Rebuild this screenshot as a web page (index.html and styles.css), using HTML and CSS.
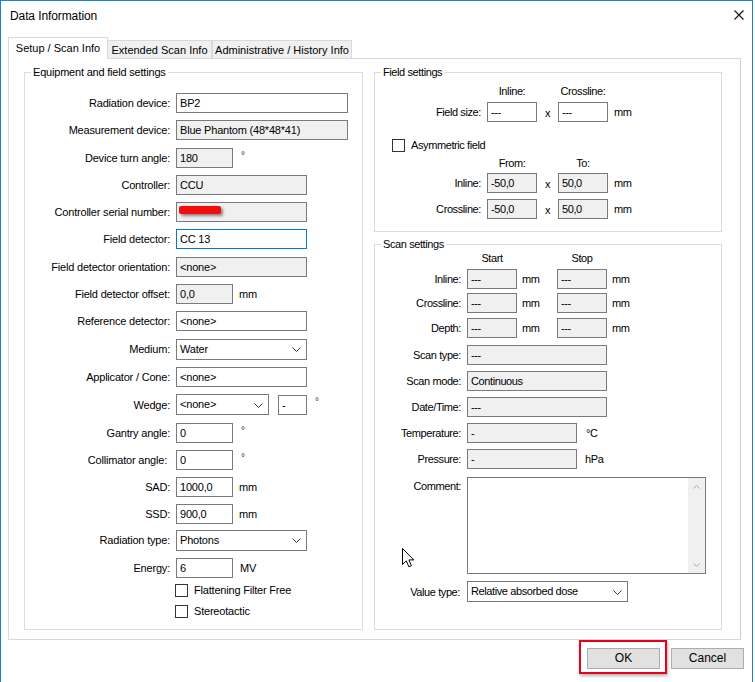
FILE: index.html
```html
<!DOCTYPE html>
<html lang="en">
<head>
<meta charset="utf-8">
<title>Data Information</title>
<link rel="stylesheet" href="styles.css">
</head>
<body>
<div class="window">
  <div class="titlebar">
    <span class="title">Data Information</span>
    <svg class="close" width="10" height="10" viewBox="0 0 10 10"><path d="M0.5 0.5 L9.5 9.5 M9.5 0.5 L0.5 9.5" stroke="#111" stroke-width="1.1" fill="none"/></svg>
  </div>

  <div class="tabs">
    <div class="tab active">Setup / Scan Info</div>
    <div class="tab t-ext">Extended Scan Info</div>
    <div class="tab t-adm">Administrative / History Info</div>
  </div>

  <div class="panel">
    <div class="group g-equip">
      <div class="group-title">Equipment and field settings</div>
      <div class="form">
        <div class="row"><span class="lbl">Radiation device:</span><span class="inp w-xl">BP2</span></div>
        <div class="row"><span class="lbl">Measurement device:</span><span class="inp ro w-xl">Blue Phantom (48*48*41)</span></div>
        <div class="row"><span class="lbl">Device turn angle:</span><span class="inp ro w-s">180</span><span class="deg">°</span></div>
        <div class="row"><span class="lbl">Controller:</span><span class="inp ro w-l">CCU</span></div>
        <div class="row"><span class="lbl">Controller serial number:</span><span class="inp ro w-l"><span class="redact"></span></span></div>
        <div class="row"><span class="lbl">Field detector:</span><span class="inp focus w-l">CC 13</span></div>
        <div class="row"><span class="lbl">Field detector orientation:</span><span class="inp ro w-l">&lt;none&gt;</span></div>
        <div class="row"><span class="lbl">Field detector offset:</span><span class="inp ro w-s">0,0</span><span class="unit">mm</span></div>
        <div class="row"><span class="lbl">Reference detector:</span><span class="inp w-l">&lt;none&gt;</span></div>
        <div class="row sel-row"><span class="lbl">Medium:</span><span class="sel w-l">Water<svg class="chev" width="9" height="5" viewBox="0 0 9 5"><path d="M0.5 0.5 L4.5 4.5 L8.5 0.5" stroke="#333" fill="none"/></svg></span></div>
        <div class="row"><span class="lbl">Applicator / Cone:</span><span class="inp w-l">&lt;none&gt;</span></div>
        <div class="row sel-row"><span class="lbl">Wedge:</span><span class="sel w-m">&lt;none&gt;<svg class="chev" width="9" height="5" viewBox="0 0 9 5"><path d="M0.5 0.5 L4.5 4.5 L8.5 0.5" stroke="#333" fill="none"/></svg></span><span class="inp w-xs gap9">-</span><span class="deg">°</span></div>
        <div class="row"><span class="lbl">Gantry angle:</span><span class="inp w-s">0</span><span class="deg">°</span></div>
        <div class="row"><span class="lbl lbl-coll">Collimator angle:</span><span class="inp w-s">0</span><span class="deg">°</span></div>
        <div class="row"><span class="lbl">SAD:</span><span class="inp w-s">1000,0</span><span class="unit">mm</span></div>
        <div class="row"><span class="lbl">SSD:</span><span class="inp w-s">900,0</span><span class="unit">mm</span></div>
        <div class="row sel-row rt"><span class="lbl">Radiation type:</span><span class="sel w-l">Photons<svg class="chev" width="9" height="5" viewBox="0 0 9 5"><path d="M0.5 0.5 L4.5 4.5 L8.5 0.5" stroke="#333" fill="none"/></svg></span></div>
        <div class="row"><span class="lbl">Energy:</span><span class="inp w-s">6</span><span class="unit u7">MV</span></div>
        <div class="chkrow c1"><span class="chk"></span><span>Flattening Filter Free</span></div>
        <div class="chkrow c2"><span class="chk"></span><span>Stereotactic</span></div>
      </div>
    </div>

    <div class="rightcol">
      <div class="group g-field">
        <div class="group-title">Field settings</div>
        <div class="fgrid hdr h1"><span></span><span class="ctr">Inline:</span><span></span><span class="ctr">Crossline:</span><span></span></div>
        <div class="fgrid frow r1"><span class="rl">Field size:</span><span class="inp">---</span><span class="ctr x">x</span><span class="inp">---</span><span class="unit">mm</span></div>
        <div class="chkrow asym"><span class="chk"></span><span>Asymmetric field</span></div>
        <div class="fgrid hdr h2"><span></span><span class="ctr">From:</span><span></span><span class="ctr">To:</span><span></span></div>
        <div class="fgrid frow r2"><span class="rl">Inline:</span><span class="inp ro">-50,0</span><span class="ctr x">x</span><span class="inp ro">50,0</span><span class="unit">mm</span></div>
        <div class="fgrid frow r3"><span class="rl">Crossline:</span><span class="inp ro">-50,0</span><span class="ctr x">x</span><span class="inp ro">50,0</span><span class="unit">mm</span></div>
      </div>

      <div class="group g-scan">
        <div class="group-title">Scan settings</div>
        <div class="sgrid hdr s-h"><span></span><span class="ctr">Start</span><span></span><span class="ctr">Stop</span><span></span></div>
        <div class="sgrid srow s1"><span class="rl">Inline:</span><span class="inp ro">---</span><span class="unit">mm</span><span class="inp ro">---</span><span class="unit">mm</span></div>
        <div class="sgrid srow s2"><span class="rl">Crossline:</span><span class="inp ro">---</span><span class="unit">mm</span><span class="inp ro">---</span><span class="unit">mm</span></div>
        <div class="sgrid srow s3"><span class="rl">Depth:</span><span class="inp ro">---</span><span class="unit">mm</span><span class="inp ro">---</span><span class="unit">mm</span></div>
        <div class="srow2 m7"><span class="rl2">Scan type:</span><span class="inp ro w-140">---</span></div>
        <div class="srow2 m6"><span class="rl2">Scan mode:</span><span class="inp ro w-140">Continuous</span></div>
        <div class="srow2 m6"><span class="rl2">Date/Time:</span><span class="inp ro w-140">---</span></div>
        <div class="srow2 m6"><span class="rl2">Temperature:</span><span class="inp ro w-110">-</span><span class="unit u9">°C</span></div>
        <div class="srow2 m6"><span class="rl2">Pressure:</span><span class="inp ro w-110">-</span><span class="unit u8">hPa</span></div>
        <div class="srow2 comment-row"><span class="rl2 top">Comment:</span>
          <div class="textarea">
            <div class="scrollbar">
              <span class="sb-btn"><svg width="7" height="4" viewBox="0 0 7 4"><path d="M0.5 3.5 L3.5 0.5 L6.5 3.5" stroke="#a6a6a6" fill="none"/></svg></span>
              <span class="sb-btn"><svg width="7" height="4" viewBox="0 0 7 4"><path d="M0.5 0.5 L3.5 3.5 L6.5 0.5" stroke="#a6a6a6" fill="none"/></svg></span>
            </div>
          </div>
        </div>
        <div class="srow2 vt"><span class="rl2 rl-vt">Value type:</span><span class="sel w-161">Relative absorbed dose<svg class="chev" width="9" height="5" viewBox="0 0 9 5"><path d="M0.5 0.5 L4.5 4.5 L8.5 0.5" stroke="#333" fill="none"/></svg></span></div>
      </div>
    </div>
  </div>

  <div class="buttons">
    <div class="highlight"><button class="btn">OK</button></div>
    <button class="btn cancel">Cancel</button>
  </div>

  <svg class="cursor" width="13" height="20" viewBox="0 0 13 20"><path d="M0.5 0.5 L0.5 16.5 L4.3 12.9 L6.9 18.8 L9.4 17.7 L6.9 11.9 L11.8 11.9 Z" fill="#fff" stroke="#000" stroke-width="1" stroke-linejoin="miter"/></svg>
</div>
</body>
</html>
```

FILE: styles.css
```css
* { box-sizing: border-box; }
html, body { margin: 0; padding: 0; background: #fff; }
body {
  font-family: "Liberation Sans", Arial, sans-serif;
  font-size: 11px;
  color: #000;
}

.window {
  position: relative;
  width: 753px;
  height: 682px;
  border: 1px solid #1883d7;
  border-bottom: none;
  background: #fff;
  overflow: hidden;
}

/* title bar */
.titlebar {
  display: flex;
  justify-content: space-between;
  align-items: flex-start;
  height: 36px;
}
.title {
  font-size: 12px;
  line-height: 15px;
  margin: 8px 0 0 9px;
  letter-spacing: -0.1px;
}
.close { margin: 9px 8px 0 0; }

/* tabs */
.tabs {
  position: relative;
  z-index: 1;
  display: flex;
  align-items: flex-end;
  height: 21px;
  margin-left: 7px;
}
.tab {
  height: 18px;
  line-height: 18px;
  border: 1px solid #d9d9d9;
  border-bottom: none;
  background: #f0f0f0;
  text-align: center;
  white-space: nowrap;
}
.tab.active {
  width: 100px;
  height: 22px;
  line-height: 21px;
  margin-bottom: -1px;
  background: #fff;
}
.t-ext { width: 104px; border-left: none; }
.t-adm { width: 140px; border-left: 1px solid #d9d9d9; }

/* panel */
.panel {
  margin-left: 7px;
  width: 733px;
  height: 582px;
  border: 1px solid #d9d9d9;
  border-right-color: #cfcfcf;
  padding: 13px 17px 9px 15px;
  display: flex;
  gap: 11px;
  letter-spacing: -0.2px;
}

.group {
  border: 1px solid #dcdcdc;
}
.group-title {
  display: table;
  margin: -7px 0 0 6px;
  padding: 0 2px;
  background: #fff;
  line-height: 13px;
  white-space: nowrap;
}

.g-equip { width: 339px; }
.rightcol {
  width: 348px;
  display: flex;
  flex-direction: column;
}
.g-field { height: 160px; letter-spacing: -0.4px; }
.g-scan { flex: 1; margin-top: 12px; letter-spacing: -0.4px; }

/* left form */
.form {
  display: flex;
  flex-direction: column;
  gap: 7.3px;
  padding-top: 14px;
}
.row {
  display: flex;
  align-items: center;
  height: 20px;
}
.sel-row { height: 21px; }
.row.rt { margin-top: -2px; }
.lbl {
  flex: none;
  width: 151px;
  padding-right: 6px;
  text-align: right;
  white-space: nowrap;
}
.lbl-coll { padding-right: 9px; }

.inp {
  display: block;
  flex: none;
  height: 20px;
  border: 1px solid #7a7a7a;
  background: #fff;
  padding: 0 3px;
  line-height: 18px;
  white-space: nowrap;
  overflow: hidden;
}
.inp.ro { background: #f0f0f0; }
.inp.focus { border-color: #0078d7; }

.sel {
  display: flex;
  align-items: center;
  justify-content: space-between;
  flex: none;
  height: 21px;
  border: 1px solid #7a7a7a;
  background: #fff;
  padding: 0 5px 0 3px;
  line-height: 19px;
  white-space: nowrap;
}
.chev { flex: none; margin-top: 1px; }

.w-xl { width: 172px; }
.w-l { width: 131px; }
.w-m { width: 93px; }
.w-s { width: 57px; }
.w-xs { width: 29px; }
.gap9 { margin-left: 9px; }
.w-140 { width: 140px; }
.w-110 { width: 110px; }
.w-161 { width: 161px; }

.unit { margin-left: 6px; white-space: nowrap; }
.u7 { margin-left: 7px; }
.u8 { margin-left: 8px; }
.u9 { margin-left: 9px; }
.deg {
  align-self: flex-start;
  margin: 1px 0 0 8px;
  line-height: 13px;
  font-size: 10px;
  color: #333;
}

.redact {
  display: inline-block;
  width: 42px;
  height: 8px;
  margin: 3px 0 0 -1px;
  vertical-align: top;
  background: #f20c0c;
  border-radius: 2px;
  box-shadow: 2px 2px 3px rgba(60, 40, 40, 0.55);
}

/* checkboxes */
.chkrow {
  display: flex;
  align-items: center;
  gap: 6px;
  height: 13px;
  line-height: 13px;
  white-space: nowrap;
}
.chk {
  flex: none;
  width: 13px;
  height: 13px;
  border: 1px solid #333;
  background: #fff;
}
.chkrow.c1 { margin: -1px 0 0 150px; }
.chkrow.c2 { margin-left: 150px; }
.chkrow.asym { margin: 17px 0 0 17px; }

/* field settings grid */
.fgrid {
  display: grid;
  grid-template-columns: 112px 50px 21px 50px auto;
  align-items: center;
}
.sgrid {
  display: grid;
  grid-template-columns: 92px 50px 40px 50px auto;
  align-items: center;
}
.hdr { line-height: 13px; height: 13px; }
.ctr { text-align: center; white-space: nowrap; }
.rl {
  text-align: right;
  padding-right: 6px;
  white-space: nowrap;
}
.frow, .srow { height: 20px; }
.frow .unit, .srow .unit { margin-left: 0; padding-left: 6px; }
.srow .unit { padding-left: 5px; }
.x { line-height: 13px; padding-top: 2px; }

.h1 { margin-top: 6px; }
.r1 { margin-top: 4px; }
.h2 { margin-top: 5px; }
.r2 { margin-top: 3px; }
.r3 { margin-top: 6px; }

/* scan settings */
.s-h { margin-top: 1px; }
.s1 { margin-top: 4px; }
.s2 { margin-top: 4px; }
.s3 { margin-top: 5px; }
.srow2 {
  display: flex;
  align-items: center;
  height: 20px;
}
.m7 { margin-top: 7px; }
.m6 { margin-top: 6px; }
.rl2 {
  flex: none;
  width: 92px;
  padding-right: 6px;
  text-align: right;
  white-space: nowrap;
}
.rl-vt { padding-right: 7px; }
.comment-row {
  height: 97px;
  align-items: flex-start;
  margin-top: 8px;
}
.rl2.top { padding-top: 3px; line-height: 13px; }
.textarea {
  width: 239px;
  height: 97px;
  border: 1px solid #7a7a7a;
  background: #fff;
  display: flex;
  justify-content: flex-end;
}
.scrollbar {
  width: 17px;
  background: #f0f0f0;
  display: flex;
  flex-direction: column;
  justify-content: space-between;
}
.sb-btn {
  height: 17px;
  display: flex;
  align-items: center;
  justify-content: center;
}
.srow2.vt { height: 21px; margin-top: 7px; }

/* buttons */
.buttons {
  display: flex;
  justify-content: flex-end;
  align-items: flex-start;
  gap: 4px;
  padding-right: 8px;
}
.highlight {
  border: 2px solid #e8001c;
  padding: 6px 5px 3px 6px;
  box-shadow: 1px 2px 3px rgba(0, 0, 0, 0.3);
}
.btn {
  display: block;
  width: 73px;
  height: 21px;
  margin: 0;
  padding: 0;
  border: 1px solid #adadad;
  background: #e1e1e1;
  font-family: "Liberation Sans", Arial, sans-serif;
  font-size: 12px;
  color: #000;
  line-height: 19px;
  text-align: center;
}
.btn.cancel { margin-top: 8px; }

/* mouse pointer over the dialog */
.cursor {
  position: absolute;
  left: 401px;
  top: 547px;
}
```
